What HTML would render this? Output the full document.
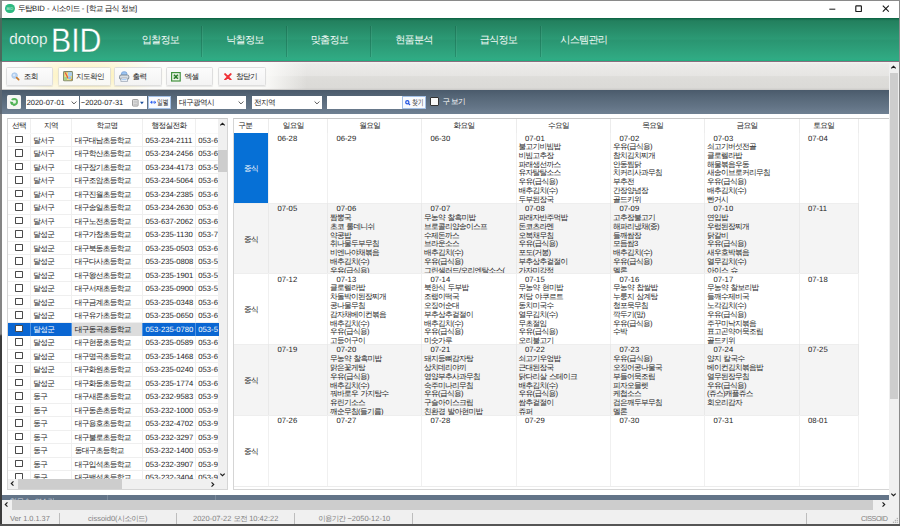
<!DOCTYPE html><html><head><meta charset="utf-8"><title>dotop BID</title><style>*{box-sizing:border-box;margin:0;padding:0}
html,body{width:900px;height:526px;overflow:hidden;background:#fff}
body{position:relative;font-family:"Liberation Sans",sans-serif;font-size:7.7px;color:#1a1a1a;line-height:1;text-rendering:geometricPrecision}
.k{letter-spacing:-0.68px}
.k b{font-weight:normal;letter-spacing:0}
.abs{position:absolute}
/* window frame */
.frame-l{position:absolute;left:0;top:0;width:1.6px;height:526px;background:linear-gradient(#8c8f8d 0,#8c8f8d 18px,#4a6a5c 18px,#4a6a5c 61px,#838383 62px,#838383 90px,#5d6873 90px,#5d6873 114px,#858585 114px,#858585 334px,#3c3c3c 336px,#3c3c3c 100%);z-index:50}
.frame-t{position:absolute;left:0;top:0;width:900px;height:1px;background:#8a8a8a;z-index:50}
.frame-r{position:absolute;left:899px;top:0;width:1px;height:526px;background:#8a8a8a;z-index:50}
.frame-b{position:absolute;left:0;top:523.5px;width:900px;height:2.5px;background:#555;z-index:50}
/* title bar */
.title{position:absolute;left:0;top:0;width:900px;height:18px;background:#fff}
.title .ico{position:absolute;left:5px;top:3.9px;width:9.6px;height:9.6px;border-radius:50%;background:#2db980}
.title .ico span{position:absolute;left:0;top:0;width:9.6px;line-height:9.6px;text-align:center;color:#d9f2e8;font-size:4px;letter-spacing:0}
.title .txt{position:absolute;left:18px;top:4.6px;font-size:7.7px;color:#111;white-space:nowrap}
.wbtn{position:absolute;top:0;height:18px}
/* green header */
.hdr{position:absolute;left:0;top:18px;width:900px;height:43.5px;background:linear-gradient(#0e6645 0,#0f6746 .8px,#1d7857 1.8px,#23805e 3px,#2c9a75 21px,#2a9571 22.3px,#30a982 39.5px,#2fac85 41.3px,#22ad7f 42.6px,#22ad7f 100%)}
.hdr-line{position:absolute;left:0;top:61px;width:900px;height:1px;background:#866f7e}
.logo1{position:absolute;left:9.2px;top:32px;font-size:15.3px;color:#fff;letter-spacing:0;-webkit-text-stroke:.2px #2a9470;white-space:nowrap}
.logo2{position:absolute;left:51.2px;top:23.6px;font-size:34.2px;color:#fff;letter-spacing:0;transform-origin:0 0;transform:scaleX(.885);-webkit-text-stroke:.3px #2a9470;white-space:nowrap}
.menu{position:absolute;top:0;height:43.5px;width:84.5px;text-align:center;color:#f4fbf8;font-size:10.2px;letter-spacing:-.8px;line-height:46px;padding-left:2.4px}
.msep{position:absolute;top:7.5px;width:1px;height:31px;background:rgba(10,70,50,.26);box-shadow:1px 0 0 rgba(255,255,255,.06)}
/* toolbar */
.tb{position:absolute;left:1.5px;top:62px;width:887px;height:28px;background:linear-gradient(#f3f3f1 0,#eceBe9 8%,#e6e5e3 50%,#dedddA 52%,#dbdad7 92%,#c9c8c6 100%)}
.tbw{position:absolute;left:0;top:0;width:305px;height:27px;background:linear-gradient(90deg,rgba(252,252,250,1) 0,rgba(252,252,250,1) 85%,rgba(252,252,250,0) 100%)}
.glow{position:absolute;left:5px;top:0;width:160px;height:27px;background:radial-gradient(ellipse 50% 75% at 50% 50%,rgba(255,234,140,.75) 0,rgba(255,236,150,.5) 35%,rgba(255,240,170,0) 100%)}
.btn{position:absolute;top:5px;height:18.5px;border:1px solid #dedede;border-radius:1.5px;background:linear-gradient(#fcfcfc,#f3f3f3);box-shadow:0 1px 1px rgba(0,0,0,.08);white-space:nowrap}
.btn .t{position:absolute;top:4.6px;color:#222}
.btn svg{position:absolute}
/* filter bar */
.fb{position:absolute;left:1.5px;top:90px;width:887px;height:24px;background:linear-gradient(#4a5a6b 0,#566778 30%,#637486 70%,#6f8092 100%)}
.inp{position:absolute;top:6.3px;height:12.6px;background:#fff;border:0;white-space:nowrap}
.inp .t{position:absolute;left:2.5px;top:2.6px;color:#222}
.chev{position:absolute;right:.7px;top:3.8px}
/* main panel */
.main{position:absolute;left:1.5px;top:114px;width:887px;height:381px;background:#fff}
/* left table */
.ltab{position:absolute;left:7px;top:118px;width:221px;height:372px;border:1px solid #d5d5d5;border-top-color:#c8c8c8;background:#fff;overflow:hidden}
.lh{position:absolute;left:0;top:0;width:211px;height:14px}
.lhc{position:absolute;top:0;height:14px;line-height:14.5px;text-align:center;border-right:1px solid #efefef;color:#222}
.lr{position:absolute;left:0;width:211px;height:13.5px;border-top:1px solid #efefef}
.lr.r0{border-top-color:#f8f8f8}
.lc{position:absolute;top:0;height:13.5px;line-height:13px;white-space:nowrap;overflow:hidden;border-right:1px solid #efefef;color:#1a1a1a}
.c0{left:0;width:23px}.c1{left:23px;width:41px;padding-left:2.3px}.c2{left:64px;width:71px;padding-left:2.7px}.c3{left:135px;width:53px;padding-left:2.5px}.c4{left:188px;width:23px;padding-left:2.3px;border-right:0}
.cb{position:absolute;left:7.1px;top:1.9px;width:8px;height:7.9px;border:.85px solid #4a4a4a;border-radius:.8px;background:#fff}
.sel{background:#0a66d2;height:14.3px;z-index:2}
.sel .lc{color:#fff;border-right-color:#4f93e2;height:13.3px}
.sel .c2{background:#dcdcdc;color:#111}
.lvs{position:absolute;left:210.3px;top:0;width:9.7px;height:360px;background:#f0f0f0}
.lhs{position:absolute;left:0;top:360.4px;width:219px;height:9.6px;background:#f0f0f0}
.arr{position:absolute;width:9px;height:9px}
.arr svg{position:absolute;left:0;top:0}
.lvs .up{left:-.2px;top:1px}.lvs .dn{left:-.3px;top:351px}
.lvs .thumb{position:absolute;left:0;top:31px;width:9.7px;height:22px;background:#cdcdcd}
.lhs .l{left:0;top:0}.lhs .r{left:199.7px;top:.8px}
.lhs .thumb{position:absolute;left:9.6px;top:0;height:9.6px;width:104px;background:#cdcdcd}
/* calendar */
.cal{position:absolute;left:233px;top:118px;width:656px;height:372px;border:1px solid #d5d5d5;border-top-color:#c8c8c8;border-right:0;background:#fff;overflow:hidden}
.ch{position:absolute;top:0;height:14px;line-height:14.5px;text-align:center;padding-right:9.5px;border-right:1px solid #ececec;color:#222}
.cr{position:absolute;left:0;width:624.5px;box-shadow:inset 0 1px 0 #eeeeee;overflow:hidden}
.cr.first{box-shadow:none}
.cr.alt{background:#f4f4f4}
.cr.alt .cc{border-right-color:#e9e9e9}
.cc{position:absolute;top:0;height:100%;border-right:1px solid #f0f0f0;padding:1.6px 0 0 2px;line-height:8.8px;white-space:nowrap;overflow:hidden;color:#1a1a1a}
.cc.g{padding:0;text-align:center}
.cc.gsel{background:#0670d6;color:#fff}
.cc .d{padding-left:6.5px;height:8.8px;position:relative;top:.8px}
.cc .it{height:8.8px;position:relative;top:.8px;word-spacing:.9px}
/* bottom */
.dark{position:absolute;left:1.5px;top:494.5px;width:887px;height:5.5px;background:#637488}
.ohs{position:absolute;left:1.5px;top:500px;width:887px;height:9.5px;background:#f0f0f0}
.ohs .thumb{position:absolute;left:10.6px;top:0;width:861.4px;height:9.5px;background:#cdcdcd}
.ovs{position:absolute;left:888.5px;top:62px;width:10.5px;height:447.5px;background:#f0f0f0}
.ovs .thumb{position:absolute;left:1px;top:10.5px;width:8px;height:326px;background:#cdcdcd}
.sb{position:absolute;left:1.2px;top:509.5px;width:898px;height:14.5px;background:#f0f0f0;color:#818181;font-size:7.4px}
.sb .t{position:absolute;top:5px;white-space:nowrap}
.sb .c{text-align:center;font-size:7.5px}
.sb .c b{word-spacing:0}
.sb .s{position:absolute;top:3.5px;width:1px;height:10.5px;background:#bdbdbd}

.ohs svg,.ovs svg,.arr svg{transform:scale(.88)}
.cr.first .d{top:.5px}
.cr.first .it{top:-.2px}
</style></head><body>
<div class="title">
 <div class="ico"><span>BID</span></div>
 <div class="txt k" style="top:4.9px">두탑<b>BID - </b>시소이드<b> - [</b>학교<b> </b>급식<b> </b>정보<b>]</b></div>
 <svg class="abs" style="left:826px;top:3px" width="70" height="12" viewBox="0 0 70 12">
  <path d="M3.3 6.2 H9.3" stroke="#2a2a2a" stroke-width="1.1" fill="none"/>
  <rect x="29.8" y="2.9" width="5.6" height="5.6" rx=".6" fill="none" stroke="#1c1c1c" stroke-width="1.15"/>
  <path d="M56.8 2.7 L62.8 8.7 M62.8 2.7 L56.8 8.7" stroke="#151515" stroke-width="1.1" fill="none"/>
 </svg>
</div>
<div class="hdr">
 <div class="menu" style="left:117px">입찰정보</div>
 <div class="menu" style="left:201.5px">낙찰정보</div>
 <div class="menu" style="left:286px">맞춤정보</div>
 <div class="menu" style="left:370.5px">현품분석</div>
 <div class="menu" style="left:455px">급식정보</div>
 <div class="menu" style="left:540.3px">시스템관리</div>
 <div class="msep" style="left:201px"></div>
 <div class="msep" style="left:285.5px"></div>
 <div class="msep" style="left:370px"></div>
 <div class="msep" style="left:454.5px"></div>
 <div class="msep" style="left:540px"></div>
</div>
<div class="logo1">dotop</div>
<div class="logo2">BID</div>
<div class="hdr-line"></div>

<div class="tb">
 <div class="tbw"></div>
 <div class="glow"></div>
 <div class="btn" style="left:4.3px;width:47.7px">
  <svg style="left:4.5px;top:4.2px" width="9.4" height="9.4" viewBox="0 0 11 11"><circle cx="4.2" cy="4.2" r="3.3" fill="#b9d3f1" stroke="#9dbfe8" stroke-width=".8"/><circle cx="3.6" cy="3.6" r="1.4" fill="#dde9f9"/><path d="M6.6 6.6 L9 9" stroke="#c97a2b" stroke-width="2" stroke-linecap="round"/></svg>
  <span class="t k" style="left:17px">조회</span></div>
 <div class="btn" style="left:56.5px;width:52.6px;background:linear-gradient(#fefefc,#f8f8f4);border-color:#e2e0d6">
  <svg style="left:3.6px;top:3.3px" width="11" height="11" viewBox="0 0 11 11"><rect x=".6" y=".6" width="8.8" height="9.2" rx=".8" fill="#f1e27c" stroke="#80896e" stroke-width="1.1"/><path d="M5 1.2 H8.9 V5 H5Z" fill="#a9cdf0"/><path d="M1.2 6 H4 V9.2 H1.2Z" fill="#a6d08a"/><path d="M2.2 1.4 L5.2 7.6" stroke="#e4513f" stroke-width="1.2"/><circle cx="6.6" cy="6.8" r="1.6" fill="#8fbdf0"/><path d="M7.4 9.3 H8.9 V7.6Z" fill="#d98a2b"/></svg>
  <span class="t k" style="left:16.9px">지도확인</span></div>
 <div class="btn" style="left:112.9px;width:47.6px">
  <svg style="left:4px;top:2.8px" width="11" height="11.5" viewBox="0 0 11 11.5"><path d="M2.6 4.4 V2.2 Q2.6 .7 5.2 .7 Q7.8 .7 7.8 2.2 V4.4Z" fill="#9cc4f2" stroke="#6d9ad6" stroke-width=".8"/><rect x=".6" y="4" width="9.2" height="4.4" rx="1.4" fill="#d9dee3" stroke="#76838f" stroke-width=".9"/><path d="M2.2 7 H8.2 L8.6 10.4 H1.8Z" fill="#f7f9fc" stroke="#8c9aaa" stroke-width=".7"/><path d="M3 8.6 H7.4" stroke="#9cc4f2" stroke-width=".9"/></svg>
  <span class="t k" style="left:17.2px">출력</span></div>
 <div class="btn" style="left:164.9px;width:47.1px">
  <svg style="left:3.8px;top:3.8px" width="10" height="10" viewBox="0 0 10 10"><rect x=".6" y=".6" width="8.6" height="8.4" fill="#f2f8ef" stroke="#43923f" stroke-width="1.2"/><rect x="1.6" y="2.6" width="6.6" height="4.4" fill="#cfe6c8"/><path d="M3 2.8 L6.8 6.8 M6.8 2.8 L3 6.8" stroke="#2c7a2c" stroke-width="1.4"/></svg>
  <span class="t k" style="left:17px">엑셀</span></div>
 <div class="btn" style="left:216.4px;width:48.1px">
  <svg style="left:5.3px;top:4.6px" width="7.8" height="7.8" viewBox="0 0 9 9"><path d="M1.3 1.3 L7.7 7.7 M7.7 1.3 L1.3 7.7" stroke="#f03238" stroke-width="2.3" stroke-linecap="round"/></svg>
  <span class="t k" style="left:17px">창닫기</span></div>
</div>

<div class="fb">
 <div class="inp" style="left:5.5px;top:5px;width:13.5px;height:13.5px;border-radius:1.5px;background:#f6f6f4">
  <svg class="abs" style="left:2px;top:2.2px" width="10" height="10" viewBox="0 0 10 10"><circle cx="5.2" cy="4.8" r="2.9" fill="#d4edd2" stroke="#55b559" stroke-width="1.7"/><path d="M5.2 4.8 L1 1.6 L1 5.4Z" fill="#f6f6f4"/><path d="M.9 4.6 L4.3 5 L2.3 7.9Z" fill="#4aae50"/><path d="M4.2 9.2 L6.8 8.2 L4.6 7Z" fill="#4aae50"/><circle cx="5.2" cy="4.8" r="1" fill="#f6f6f4"/></svg>
 </div>
 <div class="inp" style="left:24.2px;width:53.2px"><span class="t" style="left:1px;font-size:7.45px;top:2.7px">2020-07-01</span>
  <svg class="chev" width="8" height="6" viewBox="0 0 8 6"><path d="M1.6 1.5 L4 3.9 L6.4 1.5" fill="none" stroke="#3a3a3a" stroke-width=".85"/></svg></div>
 <div class="inp" style="left:78px;width:67.5px"><span class="t" style="left:1.3px;font-size:7.45px;top:2.7px">~2020-07-31</span>
  <svg class="abs" style="left:52.5px;top:2.5px" width="14" height="8" viewBox="0 0 14 8"><rect x=".5" y=".5" width="5.6" height="6.6" rx=".8" fill="#e3e3e3" stroke="#888" stroke-width=".8"/><path d="M1.5 2.2 H5 M1.5 3.8 H5 M1.5 5.4 H5" stroke="#aaa" stroke-width=".6"/><path d="M8 2.8 H11.8 L9.9 5.2Z" fill="#1a4e9a"/></svg></div>
 <div class="inp" style="left:146.7px;top:5.9px;height:13.3px;width:23px;background:#f8fafe;border:1px solid #a3c0e6">
  <svg class="abs" style="left:.8px;top:3.6px" width="6.4" height="4.6" viewBox="0 0 8 5"><path d="M0 2.5 L2.6 .3 V4.7Z M8 2.5 L5.4 .3 V4.7Z" fill="#2a5cf0"/><rect x="2.6" y="1.3" width="2.8" height="2.4" fill="#7fa2f5"/></svg>
  <span class="t" style="left:7.7px;top:2.5px;font-size:8px;letter-spacing:0;color:#333;transform-origin:0 0;transform:scaleX(.73)">일별</span></div>
 <div class="inp" style="left:175px;width:69.5px"><span class="t k">대구광역시</span>
  <svg class="chev" width="8" height="6" viewBox="0 0 8 6"><path d="M1.6 1.5 L4 3.9 L6.4 1.5" fill="none" stroke="#3a3a3a" stroke-width=".85"/></svg></div>
 <div class="inp" style="left:250px;width:70.5px"><span class="t k">전지역</span>
  <svg class="chev" width="8" height="6" viewBox="0 0 8 6"><path d="M1.6 1.5 L4 3.9 L6.4 1.5" fill="none" stroke="#3a3a3a" stroke-width=".85"/></svg></div>
 <div class="inp" style="left:325.5px;width:75.5px"></div>
 <div class="inp" style="left:400.6px;top:5.9px;height:13.3px;width:23.7px;background:#f8fafe;border:1px solid #a3c0e6">
  <svg class="abs" style="left:2.2px;top:3.3px" width="5.6" height="5.6" viewBox="0 0 7 7"><circle cx="2.9" cy="2.9" r="2" fill="#e8eefc" stroke="#2455e0" stroke-width="1.5"/><path d="M4.5 4.5 L6.3 6.3" stroke="#2455e0" stroke-width="1.6"/></svg>
  <span class="t" style="left:9.3px;top:2.5px;font-size:8px;letter-spacing:0;color:#333;transform-origin:0 0;transform:scaleX(.73)">찾기</span></div>
 <div class="abs" style="left:428.7px;top:7.4px;width:8.4px;height:8.4px;background:#f8f8f8;border:1px solid #333;border-radius:1px"></div>
 <span class="abs k" style="left:441px;top:8.4px;color:#fff;white-space:nowrap">구 보기</span>
</div>

<div class="main"></div>

<div class="ltab">
<div class="lh">
<div class="lhc k" style="left:0.0px;width:23.0px">선택</div>
<div class="lhc k" style="left:23.0px;width:41.0px">지역</div>
<div class="lhc k" style="left:64.0px;width:71.0px">학교명</div>
<div class="lhc k" style="left:135.0px;width:53.0px">행정실전화</div>
<div class="lhc k" style="left:188.0px;width:23.0px"></div>
</div>
<div class="lr r0" style="top:13.70px">
<div class="lc c0"><i class="cb"></i></div>
<div class="lc c1 k">달서구</div>
<div class="lc c2 k">대구대남초등학교</div>
<div class="lc c3">053-234-2111</div>
<div class="lc c4">053-6</div>
</div>
<div class="lr" style="top:27.20px">
<div class="lc c0"><i class="cb"></i></div>
<div class="lc c1 k">달서구</div>
<div class="lc c2 k">대구학산초등학교</div>
<div class="lc c3">053-234-2456</div>
<div class="lc c4">053-6</div>
</div>
<div class="lr" style="top:40.70px">
<div class="lc c0"><i class="cb"></i></div>
<div class="lc c1 k">달서구</div>
<div class="lc c2 k">대구장기초등학교</div>
<div class="lc c3">053-234-4173</div>
<div class="lc c4">053-5</div>
</div>
<div class="lr" style="top:54.20px">
<div class="lc c0"><i class="cb"></i></div>
<div class="lc c1 k">달서구</div>
<div class="lc c2 k">대구조암초등학교</div>
<div class="lc c3">053-234-5064</div>
<div class="lc c4">053-6</div>
</div>
<div class="lr" style="top:67.70px">
<div class="lc c0"><i class="cb"></i></div>
<div class="lc c1 k">달서구</div>
<div class="lc c2 k">대구진월초등학교</div>
<div class="lc c3">053-234-2385</div>
<div class="lc c4">053-6</div>
</div>
<div class="lr" style="top:81.20px">
<div class="lc c0"><i class="cb"></i></div>
<div class="lc c1 k">달서구</div>
<div class="lc c2 k">대구송일초등학교</div>
<div class="lc c3">053-234-2630</div>
<div class="lc c4">053-6</div>
</div>
<div class="lr" style="top:94.70px">
<div class="lc c0"><i class="cb"></i></div>
<div class="lc c1 k">달서구</div>
<div class="lc c2 k">대구노전초등학교</div>
<div class="lc c3">053-637-2062</div>
<div class="lc c4">053-6</div>
</div>
<div class="lr" style="top:108.20px">
<div class="lc c0"><i class="cb"></i></div>
<div class="lc c1 k">달성군</div>
<div class="lc c2 k">대구가창초등학교</div>
<div class="lc c3">053-235-1130</div>
<div class="lc c4">053-7</div>
</div>
<div class="lr" style="top:121.70px">
<div class="lc c0"><i class="cb"></i></div>
<div class="lc c1 k">달성군</div>
<div class="lc c2 k">대구북동초등학교</div>
<div class="lc c3">053-235-0503</div>
<div class="lc c4">053-6</div>
</div>
<div class="lr" style="top:135.20px">
<div class="lc c0"><i class="cb"></i></div>
<div class="lc c1 k">달성군</div>
<div class="lc c2 k">대구다사초등학교</div>
<div class="lc c3">053-235-0808</div>
<div class="lc c4">053-5</div>
</div>
<div class="lr" style="top:148.70px">
<div class="lc c0"><i class="cb"></i></div>
<div class="lc c1 k">달성군</div>
<div class="lc c2 k">대구왕선초등학교</div>
<div class="lc c3">053-235-1901</div>
<div class="lc c4">053-5</div>
</div>
<div class="lr" style="top:162.20px">
<div class="lc c0"><i class="cb"></i></div>
<div class="lc c1 k">달성군</div>
<div class="lc c2 k">대구서재초등학교</div>
<div class="lc c3">053-235-0900</div>
<div class="lc c4">053-5</div>
</div>
<div class="lr" style="top:175.70px">
<div class="lc c0"><i class="cb"></i></div>
<div class="lc c1 k">달성군</div>
<div class="lc c2 k">대구금계초등학교</div>
<div class="lc c3">053-235-0348</div>
<div class="lc c4">053-6</div>
</div>
<div class="lr" style="top:189.20px">
<div class="lc c0"><i class="cb"></i></div>
<div class="lc c1 k">달성군</div>
<div class="lc c2 k">대구유가초등학교</div>
<div class="lc c3">053-235-0650</div>
<div class="lc c4">053-6</div>
</div>
<div class="lr sel" style="top:202.70px">
<div class="lc c0"><i class="cb"></i></div>
<div class="lc c1 k">달성군</div>
<div class="lc c2 k">대구동곡초등학교</div>
<div class="lc c3">053-235-0780</div>
<div class="lc c4">053-5</div>
</div>
<div class="lr" style="top:216.20px">
<div class="lc c0"><i class="cb"></i></div>
<div class="lc c1 k">달성군</div>
<div class="lc c2 k">대구현풍초등학교</div>
<div class="lc c3">053-235-0589</div>
<div class="lc c4">053-6</div>
</div>
<div class="lr" style="top:229.70px">
<div class="lc c0"><i class="cb"></i></div>
<div class="lc c1 k">달성군</div>
<div class="lc c2 k">대구명곡초등학교</div>
<div class="lc c3">053-235-1468</div>
<div class="lc c4">053-6</div>
</div>
<div class="lr" style="top:243.20px">
<div class="lc c0"><i class="cb"></i></div>
<div class="lc c1 k">달성군</div>
<div class="lc c2 k">대구화원초등학교</div>
<div class="lc c3">053-235-0240</div>
<div class="lc c4">053-6</div>
</div>
<div class="lr" style="top:256.70px">
<div class="lc c0"><i class="cb"></i></div>
<div class="lc c1 k">달성군</div>
<div class="lc c2 k">대구화동초등학교</div>
<div class="lc c3">053-235-1774</div>
<div class="lc c4">053-6</div>
</div>
<div class="lr" style="top:270.20px">
<div class="lc c0"><i class="cb"></i></div>
<div class="lc c1 k">동구</div>
<div class="lc c2 k">대구새론초등학교</div>
<div class="lc c3">053-232-9583</div>
<div class="lc c4">053-9</div>
</div>
<div class="lr" style="top:283.70px">
<div class="lc c0"><i class="cb"></i></div>
<div class="lc c1 k">동구</div>
<div class="lc c2 k">대구동촌초등학교</div>
<div class="lc c3">053-232-1000</div>
<div class="lc c4">053-9</div>
</div>
<div class="lr" style="top:297.20px">
<div class="lc c0"><i class="cb"></i></div>
<div class="lc c1 k">동구</div>
<div class="lc c2 k">대구용호초등학교</div>
<div class="lc c3">053-232-4702</div>
<div class="lc c4">053-9</div>
</div>
<div class="lr" style="top:310.70px">
<div class="lc c0"><i class="cb"></i></div>
<div class="lc c1 k">동구</div>
<div class="lc c2 k">대구불로초등학교</div>
<div class="lc c3">053-232-3297</div>
<div class="lc c4">053-9</div>
</div>
<div class="lr" style="top:324.20px">
<div class="lc c0"><i class="cb"></i></div>
<div class="lc c1 k">동구</div>
<div class="lc c2 k">동대구초등학교</div>
<div class="lc c3">053-232-1400</div>
<div class="lc c4">053-9</div>
</div>
<div class="lr" style="top:337.70px">
<div class="lc c0"><i class="cb"></i></div>
<div class="lc c1 k">동구</div>
<div class="lc c2 k">대구입석초등학교</div>
<div class="lc c3">053-232-3907</div>
<div class="lc c4">053-9</div>
</div>
<div class="lr" style="top:351.20px">
<div class="lc c0"><i class="cb"></i></div>
<div class="lc c1 k">동구</div>
<div class="lc c2 k">대구백석초등학교</div>
<div class="lc c3">053-232-3404</div>
<div class="lc c4">053-9</div>
</div>
<div class="lvs"><div class="arr up"><svg width="9" height="9" viewBox="0 0 9 9"><path d="M2 5.6 L4.5 3.1 L7 5.6" fill="none" stroke="#1a1a1a" stroke-width="1.3"/></svg></div><div class="thumb"></div><div class="arr dn"><svg width="9" height="9" viewBox="0 0 9 9"><path d="M2 3.4 L4.5 5.9 L7 3.4" fill="none" stroke="#1a1a1a" stroke-width="1.3"/></svg></div></div>
<div class="lhs"><div class="arr l"><svg width="9" height="9" viewBox="0 0 9 9"><path d="M5.6 2 L3.1 4.5 L5.6 7" fill="none" stroke="#1a1a1a" stroke-width="1.3"/></svg></div><div class="thumb"></div><div class="arr r"><svg width="9" height="9" viewBox="0 0 9 9"><path d="M3.4 2 L5.9 4.5 L3.4 7" fill="none" stroke="#1a1a1a" stroke-width="1.3"/></svg></div></div>
</div>
<div class="cal">
<div class="ch k" style="left:0.0px;width:35.0px;padding-right:11.5px">구분</div>
<div class="ch k" style="left:35.0px;width:59.0px">일요일</div>
<div class="ch k" style="left:94.0px;width:94.0px">월요일</div>
<div class="ch k" style="left:188.0px;width:94.5px">화요일</div>
<div class="ch k" style="left:282.5px;width:94.5px">수요일</div>
<div class="ch k" style="left:377.0px;width:94.0px">목요일</div>
<div class="ch k" style="left:471.0px;width:94.5px">금요일</div>
<div class="ch k" style="left:565.5px;width:59.0px">토요일</div>
<div class="cr first" style="top:13.9px;height:70.0px">
<div class="cc g gsel k" style="left:0;width:35.0px;line-height:72.6px">중식</div>
<div class="cc" style="left:35.0px;width:59.0px"><div class="d">06-28</div>
</div>
<div class="cc" style="left:94.0px;width:94.0px"><div class="d">06-29</div>
</div>
<div class="cc" style="left:188.0px;width:94.5px"><div class="d">06-30</div>
</div>
<div class="cc" style="left:282.5px;width:94.5px"><div class="d">07-01</div>
<div class="k it">불고기비빔밥</div>
<div class="k it">비빔고추장</div>
<div class="k it">파래생선까스</div>
<div class="k it">유자탈탈소스</div>
<div class="k it">우유(급식용)</div>
<div class="k it">배추김치(수)</div>
<div class="k it">두부된장국</div>
</div>
<div class="cc" style="left:377.0px;width:94.0px"><div class="d">07-02</div>
<div class="k it">우유(급식용)</div>
<div class="k it">참치김치찌개</div>
<div class="k it">안동찜닭</div>
<div class="k it">치커리사과무침</div>
<div class="k it">부추전</div>
<div class="k it">간장양념장</div>
<div class="k it">골드키위</div>
</div>
<div class="cc" style="left:471.0px;width:94.5px"><div class="d">07-03</div>
<div class="k it">쇠고기버섯전골</div>
<div class="k it">클로렐라밥</div>
<div class="k it">해물볶음우동</div>
<div class="k it">새송이브로커리무침</div>
<div class="k it">우유(급식용)</div>
<div class="k it">배추김치(수)</div>
<div class="k it">빤거시</div>
</div>
<div class="cc" style="left:565.5px;width:59.0px"><div class="d">07-04</div>
</div>
</div>
<div class="cr alt" style="top:83.9px;height:70.4px">
<div class="cc g k" style="left:0;width:35.0px;line-height:73.0px">중식</div>
<div class="cc" style="left:35.0px;width:59.0px"><div class="d">07-05</div>
</div>
<div class="cc" style="left:94.0px;width:94.0px"><div class="d">07-06</div>
<div class="k it">짬뽕국</div>
<div class="k it">초코 롤데니쉬</div>
<div class="k it">약콩밥</div>
<div class="k it">취나물두부무침</div>
<div class="k it">비엔나야채볶음</div>
<div class="k it">배추김치(수)</div>
<div class="k it">우유(급식용)</div>
</div>
<div class="cc" style="left:188.0px;width:94.5px"><div class="d">07-07</div>
<div class="k it">무농약 찰흑미밥</div>
<div class="k it">브로콜리양송이스프</div>
<div class="k it">수제돈까스</div>
<div class="k it">브라운소스</div>
<div class="k it">배추김치(수)</div>
<div class="k it">우유(급식용)</div>
<div class="k it">그린샐러드/오리엔탈소스(</div>
</div>
<div class="cc" style="left:282.5px;width:94.5px"><div class="d">07-08</div>
<div class="k it">파래자반주먹밥</div>
<div class="k it">돈코츠라멘</div>
<div class="k it">오복채무침</div>
<div class="k it">우유(급식용)</div>
<div class="k it">포도(거봉)</div>
<div class="k it">부추상추겉절이</div>
<div class="k it">가자미강정</div>
</div>
<div class="cc" style="left:377.0px;width:94.0px"><div class="d">07-09</div>
<div class="k it">고추장불고기</div>
<div class="k it">해파리냉채(중)</div>
<div class="k it">들깨쌈장</div>
<div class="k it">모듬쌈3</div>
<div class="k it">배추김치(수)</div>
<div class="k it">우유(급식용)</div>
<div class="k it">멜론</div>
</div>
<div class="cc" style="left:471.0px;width:94.5px"><div class="d">07-10</div>
<div class="k it">연입밥</div>
<div class="k it">우렁된장찌개</div>
<div class="k it">닭갈비</div>
<div class="k it">우유(급식용)</div>
<div class="k it">새우호박볶음</div>
<div class="k it">열무김치(수)</div>
<div class="k it">아이스 슈</div>
</div>
<div class="cc" style="left:565.5px;width:59.0px"><div class="d">07-11</div>
</div>
</div>
<div class="cr" style="top:154.3px;height:70.7px">
<div class="cc g k" style="left:0;width:35.0px;line-height:73.3px">중식</div>
<div class="cc" style="left:35.0px;width:59.0px"><div class="d">07-12</div>
</div>
<div class="cc" style="left:94.0px;width:94.0px"><div class="d">07-13</div>
<div class="k it">클로렐라밥</div>
<div class="k it">차돌박이된장찌개</div>
<div class="k it">콩나물무침</div>
<div class="k it">감자채베이컨볶음</div>
<div class="k it">배추김치(수)</div>
<div class="k it">우유(급식용)</div>
<div class="k it">고등어구이</div>
</div>
<div class="cc" style="left:188.0px;width:94.5px"><div class="d">07-14</div>
<div class="k it">북한식 두부밥</div>
<div class="k it">조랭이떡국</div>
<div class="k it">오징어순대</div>
<div class="k it">부추상추겉절이</div>
<div class="k it">배추김치(수)</div>
<div class="k it">우유(급식용)</div>
<div class="k it">미숫가루</div>
</div>
<div class="cc" style="left:282.5px;width:94.5px"><div class="d">07-15</div>
<div class="k it">무농약 현미밥</div>
<div class="k it">저당 야쿠르트</div>
<div class="k it">동치미국수</div>
<div class="k it">열무김치(수)</div>
<div class="k it">무초절임</div>
<div class="k it">우유(급식용)</div>
<div class="k it">오리불고기</div>
</div>
<div class="cc" style="left:377.0px;width:94.0px"><div class="d">07-16</div>
<div class="k it">무농약 찹쌀밥</div>
<div class="k it">누룽지 삼계탕</div>
<div class="k it">청포묵무침</div>
<div class="k it">깍두기(망)</div>
<div class="k it">우유(급식용)</div>
<div class="k it">수박</div>
</div>
<div class="cc" style="left:471.0px;width:94.5px"><div class="d">07-17</div>
<div class="k it">무농약 찰보리밥</div>
<div class="k it">들깨수제비국</div>
<div class="k it">노각김치(수)</div>
<div class="k it">우유(급식용)</div>
<div class="k it">주꾸미낙지볶음</div>
<div class="k it">표고곤약어묵조림</div>
<div class="k it">골드키위</div>
</div>
<div class="cc" style="left:565.5px;width:59.0px"><div class="d">07-18</div>
</div>
</div>
<div class="cr alt" style="top:225.0px;height:70.9px">
<div class="cc g k" style="left:0;width:35.0px;line-height:73.5px">중식</div>
<div class="cc" style="left:35.0px;width:59.0px"><div class="d">07-19</div>
</div>
<div class="cc" style="left:94.0px;width:94.0px"><div class="d">07-20</div>
<div class="k it">무농약 찰흑미밥</div>
<div class="k it">맑은꽃게탕</div>
<div class="k it">우유(급식용)</div>
<div class="k it">배추김치(수)</div>
<div class="k it">꿔바로우 가지탕수</div>
<div class="k it">유린기소스</div>
<div class="k it">깨순무침(들기름)</div>
</div>
<div class="cc" style="left:188.0px;width:94.5px"><div class="d">07-21</div>
<div class="k it">돼지등뼈감자탕</div>
<div class="k it">상치데리야끼</div>
<div class="k it">영양부추사과무침</div>
<div class="k it">숙주미나리무침</div>
<div class="k it">우유(급식용)</div>
<div class="k it">구슬아이스크림</div>
<div class="k it">친환경 발아현미밥</div>
</div>
<div class="cc" style="left:282.5px;width:94.5px"><div class="d">07-22</div>
<div class="k it">쇠고기우엉밥</div>
<div class="k it">근대된장국</div>
<div class="k it">닭다리살 스테이크</div>
<div class="k it">배추김치(수)</div>
<div class="k it">우유(급식용)</div>
<div class="k it">쌈추겉절이</div>
<div class="k it">쥬퍼</div>
</div>
<div class="cc" style="left:377.0px;width:94.0px"><div class="d">07-23</div>
<div class="k it">우유(급식용)</div>
<div class="k it">오징어콩나물국</div>
<div class="k it">부들어묵조림</div>
<div class="k it">피자오믈렛</div>
<div class="k it">케첩소스</div>
<div class="k it">검은깨두부무침</div>
<div class="k it">멜론</div>
</div>
<div class="cc" style="left:471.0px;width:94.5px"><div class="d">07-24</div>
<div class="k it">양지 칼국수</div>
<div class="k it">베이컨김치볶음밥</div>
<div class="k it">열무된장무침</div>
<div class="k it">우유(급식용)</div>
<div class="k it">(쥬스)캐플쥬스</div>
<div class="k it">회오리감자</div>
</div>
<div class="cc" style="left:565.5px;width:59.0px"><div class="d">07-25</div>
</div>
</div>
<div class="cr" style="top:295.9px;height:70.8px">
<div class="cc g k" style="left:0;width:35.0px;line-height:73.4px">중식</div>
<div class="cc" style="left:35.0px;width:59.0px"><div class="d">07-26</div>
</div>
<div class="cc" style="left:94.0px;width:94.0px"><div class="d">07-27</div>
</div>
<div class="cc" style="left:188.0px;width:94.5px"><div class="d">07-28</div>
</div>
<div class="cc" style="left:282.5px;width:94.5px"><div class="d">07-29</div>
</div>
<div class="cc" style="left:377.0px;width:94.0px"><div class="d">07-30</div>
</div>
<div class="cc" style="left:471.0px;width:94.5px"><div class="d">07-31</div>
</div>
<div class="cc" style="left:565.5px;width:59.0px"><div class="d">08-01</div>
</div>
</div>
<div class="abs" style="left:0;top:366.7px;width:624.5px;height:1px;background:#ececec"></div>
</div>
<div class="dark">
 <div class="abs" style="left:105px;top:0;width:1px;height:5.5px;background:#7c8b9c"></div>
 <div class="abs" style="left:213.5px;top:0;width:1px;height:5.5px;background:#7c8b9c"></div>
 <div class="abs k" style="left:8px;top:3.2px;color:#c9d2dc;white-space:nowrap;height:2.3px;overflow:hidden;line-height:7px">항목수 : 214 건</div>
</div>
<div class="ohs"><div class="thumb"></div>
 <svg class="abs" style="left:.3px;top:0" width="9" height="9" viewBox="0 0 9 9"><path d="M5.6 2 L3.1 4.5 L5.6 7" fill="none" stroke="#1a1a1a" stroke-width="1.3"/></svg>
 <svg class="abs" style="left:877px;top:0" width="9" height="9" viewBox="0 0 9 9"><path d="M3.4 2 L5.9 4.5 L3.4 7" fill="none" stroke="#1a1a1a" stroke-width="1.3"/></svg>
</div>
<div class="ovs"><div class="thumb"></div>
 <svg class="abs" style="left:.5px;top:1px" width="9" height="9" viewBox="0 0 9 9"><path d="M2 5.6 L4.5 3.1 L7 5.6" fill="none" stroke="#1a1a1a" stroke-width="1.3"/></svg>
 <svg class="abs" style="left:.5px;top:428px" width="9" height="9" viewBox="0 0 9 9"><path d="M2 3.4 L4.5 5.9 L7 3.4" fill="none" stroke="#1a1a1a" stroke-width="1.3"/></svg>
</div>
<div class="sb">
 <span class="t" style="left:8.8px">Ver 1.0.1.37</span><i class="s" style="left:57.5px"></i>
 <span class="t k c" style="left:58px;width:117px"><b>cissoid0(</b>시소이드<b>)</b></span><i class="s" style="left:174.5px"></i>
 <span class="t k c" style="left:175.5px;width:118px"><b>2020-07-22 </b>오전<b> 10:42:22</b></span><i class="s" style="left:292.5px"></i>
 <span class="t k c" style="left:294px;width:118px;word-spacing:2px">이용기간<b> ~2050-12-10</b></span><i class="s" style="left:411px"></i>
 <i class="s" style="left:805px"></i>
 <span class="t" style="left:859.8px;letter-spacing:-.45px;font-size:7.2px">CISSOID</span>
 <svg class="abs" style="left:890.5px;top:7px" width="7" height="7" viewBox="0 0 8 8"><g fill="#9a9a9a"><rect x="5.4" y="1" width="1.2" height="1.2"/><rect x="3.2" y="3.2" width="1.2" height="1.2"/><rect x="5.4" y="3.2" width="1.2" height="1.2"/><rect x="1" y="5.4" width="1.2" height="1.2"/><rect x="3.2" y="5.4" width="1.2" height="1.2"/><rect x="5.4" y="5.4" width="1.2" height="1.2"/></g></svg>
</div>
<div class="frame-l"></div><div class="frame-t"></div><div class="frame-r"></div><div class="frame-b"></div>

</body></html>
